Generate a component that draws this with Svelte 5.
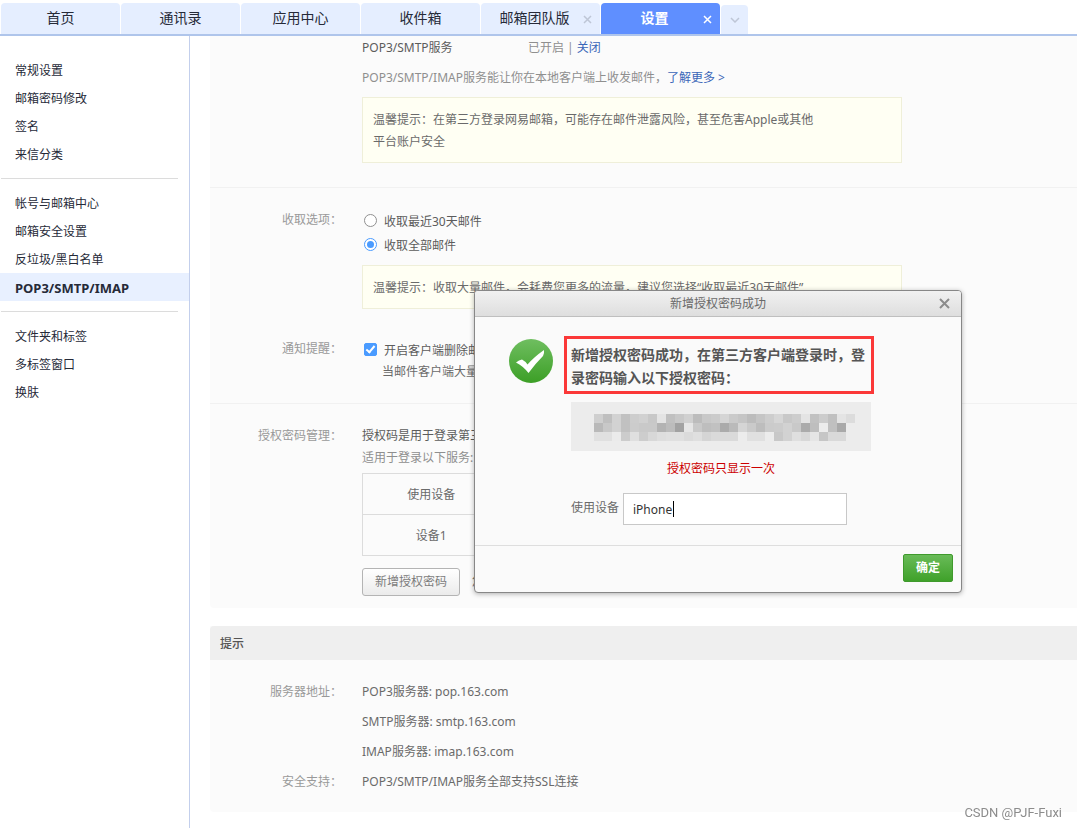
<script>
  const tabs = [
    { label: '首页' },
    { label: '通讯录' },
    { label: '应用中心' },
    { label: '收件箱' },
    { label: '邮箱团队版', closable: true },
    { label: '设置', closable: true },
  ];
  let activeTab = $state('设置');

  const menu = [
    ['常规设置', '邮箱密码修改', '签名', '来信分类'],
    ['帐号与邮箱中心', '邮箱安全设置', '反垃圾/黑白名单', 'POP3/SMTP/IMAP'],
    ['文件夹和标签', '多标签窗口', '换肤'],
  ];
  let activeItem = $state('POP3/SMTP/IMAP');

  let range = $state('all');
  let notify = $state(true);
  let device = $state('iPhone');
  let dialogOpen = $state(true);

  // masked password: grey levels of the mosaic cells, one hex pair each
  const mosaic = [
    'cf bf d2 c1 cd d1 c8 e4 c0 c8 d0 bc c8 cb d5 ca c5 bc c5 cd d6 c8 cd e4 c1 cc c0 e4 dc',
    'b9 c8 d2 c1 cc c9 c9 b3 bc a2 e6 c9 be c1 ab ba d5 ca bd cb cc d2 c9 ab be ec c0 a9',
    'e0 e0 eb cc df cd d8 de e0 e0 db df d5 da da da ec e0 e0 ec c8 d2 df d8 e5 c6 d9 d9',
  ].map((row) => row.split(' '));
</script>

<nav class="tabs">
  {#each tabs as tab}
    <div class="tab" class:active={tab.label === activeTab} class:closable={tab.closable}>
      <button type="button" class="tab-label" onclick={() => (activeTab = tab.label)}>{tab.label}</button>
      {#if tab.closable}
        <button type="button" class="tab-close" aria-label="关闭">
          <svg width="9" height="9" viewBox="0 0 9 9"><path d="M1 1l7 7M8 1l-7 7" /></svg>
        </button>
      {/if}
    </div>
  {/each}
  <button type="button" class="tab-more" aria-label="更多">
    <svg width="10" height="6" viewBox="0 0 10 6"><path d="M1 1l4 4 4-4" /></svg>
  </button>
</nav>

<div class="page">
  <aside>
    {#each menu as group}
      <ul>
        {#each group as item}
          <li class:current={item === activeItem}>
            <a href="#menu" onclick={() => (activeItem = item)}>{item}</a>
          </li>
        {/each}
      </ul>
    {/each}
  </aside>

  <main>
    <section class="panel">
      <div class="block first">
        <div class="value">
          <p class="service"><span class="dark">POP3/SMTP服务</span><span>已开启 | <a href="#off">关闭</a></span></p>
          <p class="intro">POP3/SMTP/IMAP服务能让你在本地客户端上收发邮件，<a href="#more">了解更多 &gt;</a></p>
          <div class="tip"><p>温馨提示：在第三方登录网易邮箱，可能存在邮件泄露风险，甚至危害Apple或其他平台账户安全</p></div>
        </div>
      </div>

      <div class="block">
        <div class="row">
          <div class="label">收取选项：</div>
          <div class="value">
            <label class="option"><input type="radio" name="range" value="recent" bind:group={range} /><span>收取最近30天邮件</span></label>
            <label class="option"><input type="radio" name="range" value="all" bind:group={range} /><span>收取全部邮件</span></label>
            <div class="tip spaced"><p>温馨提示：收取大量邮件，会耗费您更多的流量，建议您选择“收取最近30天邮件”</p></div>
          </div>
        </div>
        <div class="row notify">
          <div class="label">通知提醒：</div>
          <div class="value">
            <label class="option"><input type="checkbox" bind:checked={notify} /><span>开启客户端删除邮</span></label>
            <p class="indent">当邮件客户端大量</p>
          </div>
        </div>
      </div>

      <div class="block last">
        <div class="row">
          <div class="label">授权密码管理：</div>
          <div class="value">
            <p class="dark">授权码是用于登录第三</p>
            <p class="muted">适用于登录以下服务:</p>
            <table>
              <thead><tr><th>使用设备</th><th></th></tr></thead>
              <tbody><tr><td>设备1</td><td></td></tr></tbody>
            </table>
            <div class="add">
              <button type="button" class="plain" onclick={() => (dialogOpen = true)}>新增授权密码</button>
              <span>您</span>
            </div>
          </div>
        </div>
      </div>
    </section>

    <section class="panel hints">
      <h2>提示</h2>
      <div class="servers">
        <div class="row">
          <div class="label">服务器地址：</div>
          <div class="value">
            <p>POP3服务器: pop.163.com</p>
            <p>SMTP服务器: smtp.163.com</p>
            <p>IMAP服务器: imap.163.com</p>
          </div>
        </div>
        <div class="row">
          <div class="label">安全支持：</div>
          <div class="value"><p>POP3/SMTP/IMAP服务全部支持SSL连接</p></div>
        </div>
      </div>
    </section>
  </main>
</div>

{#if dialogOpen}
  <div class="dialog" role="dialog" aria-labelledby="dialog-title">
    <header>
      <span id="dialog-title">新增授权密码成功</span>
      <button type="button" class="dialog-close" aria-label="关闭" onclick={() => (dialogOpen = false)}>
        <svg width="11" height="11" viewBox="0 0 11 11"><path d="M1 1l9 9M10 1l-9 9" /></svg>
      </button>
    </header>
    <div class="dialog-body">
      <svg class="done" width="44" height="44" viewBox="0 0 44 44">
        <defs>
          <linearGradient id="green" x1="0" y1="0" x2="0" y2="1">
            <stop offset="0" stop-color="#6fbe60" />
            <stop offset="1" stop-color="#3c9f26" />
          </linearGradient>
        </defs>
        <circle cx="22" cy="22" r="22" fill="url(#green)" />
        <path d="M7 23.500Q10 21 13 20.500Q16 22 18.500 25.500Q25 18 35 11Q35.500 14 34 17Q26 25 19.500 34Q14 27 7 23.500z" fill="#fff" />
      </svg>
      <div class="dialog-main">
        <p class="message">新增授权密码成功，在第三方客户端登录时，登录密码输入以下授权密码：</p>
        <div class="password">
          <svg width="261" height="27" viewBox="0 0 261 27" shape-rendering="crispEdges">
            {#each mosaic as row, y}
              {#each row as level, x}
                <rect x={x * 9} y={y * 9} width="9" height="9" fill={`#${level}${level}${level}`} />
              {/each}
            {/each}
          </svg>
        </div>
        <p class="once">授权密码只显示一次</p>
        <div class="device">
          <label for="device">使用设备</label>
          <div class="field">
            <input id="device" type="text" bind:value={device} />
            <span class="caret"></span>
          </div>
        </div>
      </div>
    </div>
    <footer>
      <button type="button" class="confirm" onclick={() => (dialogOpen = false)}>确定</button>
    </footer>
  </div>
{/if}

<div class="watermark">CSDN @PJF-Fuxi</div>

<style>
  :global(body) {
    font: 12px/22px 'Noto Sans', 'Noto Sans CJK SC', sans-serif;
    color: #6a6a6a; background: #fff;
  }
  p, ul, h2 { margin: 0; padding: 0; }
  ul { list-style: none; }
  button { font: inherit; color: inherit; padding: 0; border: none; background: none; cursor: pointer; }
  a { color: #3a66b8; text-decoration: none; }
  svg { display: block; }
  .dark { color: #5c5c5c; }
  .muted { color: #8f8f8f; }

  .tabs {
    display: flex; align-items: flex-end; gap: 1px; box-sizing: border-box; height: 36px;
    padding-left: 1px; border-bottom: 2px solid #afc5eb;
  }
  .tab {
    position: relative; display: flex; width: 119px; height: 31px;
    border-radius: 4px 4px 0 0; background: #e5eeff; color: #262a38; font-size: 14px;
  }
  .tab.active { background: #5f8fff; color: #fff; font-weight: 700; }
  .tab-label { flex: 1; padding-bottom: 2px; }
  .closable .tab-label { padding-right: 12px; }
  .tab-close { position: absolute; right: 8px; top: 12px; }
  .tab-close path { fill: none; stroke: #bec6d6; stroke-width: 1.5; }
  .active .tab-close path { stroke: #fff; }
  .tab-more {
    display: flex; align-items: center; justify-content: center; width: 27px; height: 29px;
    border-radius: 4px 4px 0 0; background: #e5eeff;
  }
  .tab-more path { fill: none; stroke: #bec6d6; stroke-width: 1.5; }

  .page { display: flex; min-height: calc(100vh - 36px); }
  aside { flex: none; box-sizing: border-box; width: 190px; padding-top: 20px; border-right: 1px solid #c3cfec; }
  aside ul + ul::before { content: ''; display: block; height: 1px; margin: 10px 11px 10px 1px; background: #dcdcdc; }
  aside a { display: block; padding: 2px 0 0 15px; line-height: 26px; color: #262a38; }
  aside .current { background: #e8f0ff; font-size: 13px; font-weight: 700; }

  main { flex: 1; min-width: 0; padding-left: 20px; }
  .panel { background: #fbfbfb; border-radius: 0 0 0 4px; }
  .block { padding: 20px 0; border-bottom: 1px solid #f1f1f1; }
  .block.first { padding: 1px 0 24px 152px; }
  .block.last { padding: 20px 0 12px; border-bottom: none; }
  .row { display: flex; gap: 20px; }
  .label { flex: none; width: 132px; padding-top: 1px; text-align: right; color: #999; }
  .value { flex: 1; min-width: 0; white-space: nowrap; }
  .service { display: flex; color: #8f8f8f; }
  .service .dark { width: 166px; }
  .intro { padding: 8px 0; color: #8f8f8f; }
  .tip {
    box-sizing: border-box; max-width: 540px; padding: 11px 10px 9px; border: 1px solid #efefd9;
    background: #fffff3; white-space: normal;
  }
  .tip p { max-width: 448px; }
  .tip.spaced { margin-top: 9px; }
  .tip.spaced p { max-width: none; }
  .option { display: flex; align-items: center; height: 24px; color: #5c5c5c; line-height: 20px; }
  .option span { padding-top: 3px; }
  .option input {
    appearance: none; box-sizing: border-box; display: grid; place-items: center; width: 13px; height: 13px;
    margin: 0 7px 0 2px; border: 1px solid #909090; background: #fff;
  }
  .option input::after { content: ''; display: block; }
  .option input[type='radio'] { border-radius: 50%; }
  .option input[type='radio']:checked { border-color: #4a9bff; }
  .option input[type='radio']:checked::after { width: 7px; height: 7px; border-radius: 50%; background: #4a9bff; }
  .option input[type='checkbox'] { border-radius: 2px; }
  .option input[type='checkbox']:checked { border-color: #4a9bff; background: #4a9bff; }
  .option input[type='checkbox']:checked::after {
    width: 3px; height: 7px; margin-bottom: 2px; border: solid #fff; border-width: 0 2px 2px 0; transform: rotate(40deg);
  }
  .notify { margin-top: 28px; }
  .indent { padding-left: 20px; }

  .last .value { padding-top: 1px; }
  table { width: 100%; max-width: 540px; margin-top: 4px; border-collapse: collapse; table-layout: fixed; }
  th, td {
    box-sizing: border-box; height: 41px; padding: 1px 0 0; border: 1px solid #dcdcdc; border-width: 1px 0;
    text-align: center; font-weight: 400;
  }
  th:first-child, td:first-child { width: 137px; border-left-width: 1px; }
  .add { display: flex; align-items: center; gap: 12px; margin-top: 12px; }
  .plain {
    width: 98px; height: 28px; border: 1px solid #b4b4b4; border-radius: 3px;
    background: linear-gradient(#fff, #ebebeb); color: #7c7c7c;
  }

  .hints { margin-top: 18px; }
  .hints h2 {
    padding: 7px 10px 5px; border-radius: 4px 0 0 0; background: #efefef;
    color: #555; font-size: 12px; font-weight: 500;
  }
  .servers { padding: 17px 0 15px; line-height: 30px; }
  .servers .label { padding-top: 0; }

  .dialog {
    position: absolute; left: 474px; top: 290px; box-sizing: border-box; width: 488px;
    border: 1px solid #878787; border-radius: 4px; background: #fafafa; box-shadow: 0 1px 5px rgba(0, 0, 0, 0.3);
  }
  .dialog header {
    position: relative; height: 25px; border-bottom: 1px solid #bfbfbf; border-radius: 3px 3px 0 0;
    background: linear-gradient(#f1f1f1, #dedede); text-align: center; line-height: 25px;
  }
  .dialog-close { position: absolute; right: 11px; top: 7px; }
  .dialog-close path { fill: none; stroke: #8c8c8c; stroke-width: 2; }
  .dialog-body { display: flex; gap: 11px; padding: 19px 87px 20px 34px; }
  .done { flex: none; margin-top: 3px; }
  .message {
    padding: 4px 4px 2px; border: 3px solid #fb3838; color: #555;
    font-size: 14px; line-height: 23px; font-weight: 700;
  }
  .dialog-main { flex: 1; }
  .password { width: 277px; margin: 8px 0 0 7px; padding: 12px 0 10px 23px; background: #ececec; }
  .once { width: 300px; margin: 7px 0 13px 7px; text-align: center; color: #c00; }
  .device { display: flex; gap: 4px; padding-left: 7px; line-height: 30px; }
  .field { position: relative; width: 224px; }
  .field input {
    display: block; box-sizing: border-box; width: 100%; height: 32px; padding: 0 9px;
    border: 1px solid #c8c8c8; border-radius: 0; background: #fff; color: #333; font: inherit; outline: none;
  }
  .caret { position: absolute; left: 50px; top: 8px; width: 1px; height: 16px; background: #000; }
  .dialog footer { display: flex; justify-content: flex-end; padding: 8px 8px 10px; border-top: 1px solid #dedede; }
  .confirm {
    width: 50px; height: 28px; border: 1px solid #3f9a2c; border-radius: 2px;
    background: linear-gradient(#69bb58, #3fa12a); color: #fff; font-weight: 700;
  }

  .watermark {
    position: fixed; right: 15px; bottom: 4px;
    color: #8c8c8c; font-family: Roboto, sans-serif; font-size: 13px;
  }
</style>
